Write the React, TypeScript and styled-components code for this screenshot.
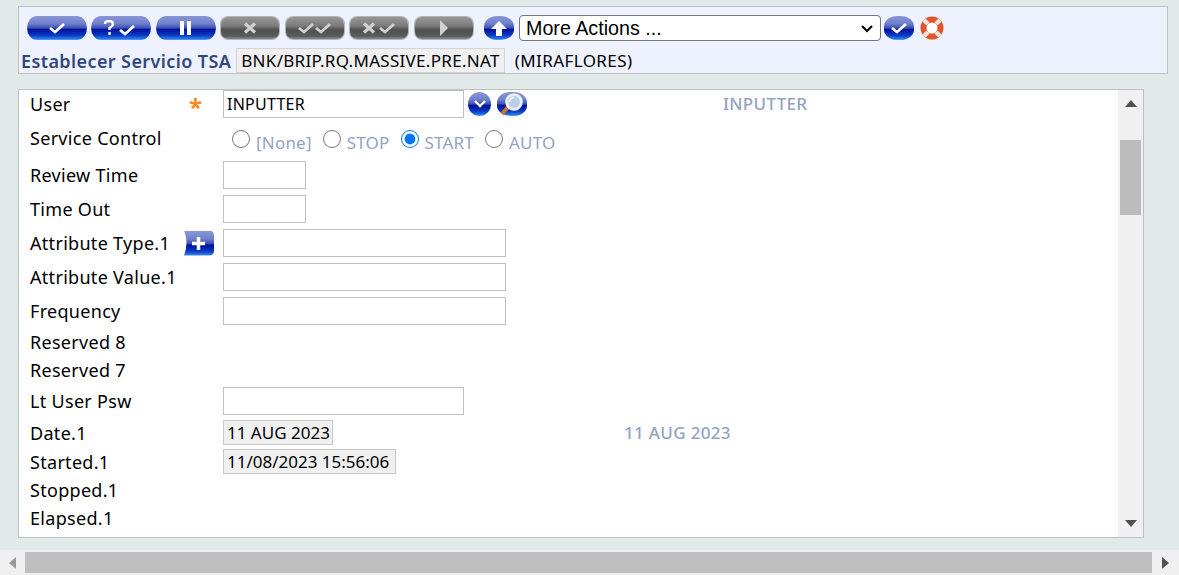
import React from 'react'
import styled, { createGlobalStyle, css } from 'styled-components'

const GlobalStyle = createGlobalStyle`
  html, body {
    margin: 0;
    height: 100%;
    overflow: hidden;
  }
  body {
    background: #e1eae8;
    color: #000;
    font-family: "Noto Sans", "DejaVu Sans", sans-serif;
    font-size: 17px;
  }
`

const Page = styled.div`
  width: 1179px;
  height: 575px;
  display: flex;
  flex-direction: column;
`

const ActionPanel = styled.div`
  box-sizing: border-box;
  width: 1150px;
  height: 68px;
  margin: 6px 0 15px 18px;
  padding: 8px 0 0 8px;
  background: #eef2fe;
  border: 1px solid #c0c0c0;
`

const Toolbar = styled.div`
  display: flex;
  align-items: center;
  height: 26px;
`

const blueGloss = css`
  background: linear-gradient(180deg, #8a96d6 0%, #6f80cc 32%, #3a50b4 50%, #02109a 56%, #0a39c4 80%, #2a7ae8 95%, #6aa2ee 100%);
`

const greyGloss = css`
  background: linear-gradient(180deg, #969696 0%, #7c7c7c 40%, #5e5e5e 52%, #505050 62%, #5c5c5c 88%, #8c8c8c 100%);
  box-shadow: 0 0 0 1px #b4b4b4;
`

const PillButton = styled.span<{ $grey?: boolean; $gap: number }>`
  display: flex;
  align-items: center;
  justify-content: center;
  flex: none;
  width: ${(p) => (p.$grey ? 58 : 60)}px;
  height: ${(p) => (p.$grey ? 22 : 24)}px;
  margin-right: ${(p) => p.$gap}px;
  border-radius: ${(p) => (p.$grey ? '7px' : '10px / 12px')};
  ${(p) => (p.$grey ? greyGloss : blueGloss)}
`

const RoundButton = styled.span<{ $w: number; $h: number; $gap?: number }>`
  display: flex;
  align-items: center;
  justify-content: center;
  flex: none;
  width: ${(p) => p.$w}px;
  height: ${(p) => p.$h}px;
  margin-right: ${(p) => p.$gap ?? 0}px;
  border-radius: ${(p) => (p.$w < 25 ? '50%' : '44%')};
  ${blueGloss}
`

const AddButton = styled.span`
  display: flex;
  align-items: center;
  justify-content: center;
  width: 31px;
  height: 25px;
  margin-left: -1px;
  clip-path: path('M1 0 H26 Q31 0 31 5 V20 Q31 25 26 25 H1 Q6 12 1 0 Z');
  ${blueGloss}
`

const Glyph = styled.svg`
  display: block;
  filter: blur(0.3px);
`

const SelectWrap = styled.span`
  position: relative;
  display: block;
  flex: none;
  width: 362px;
  height: 26px;
  margin: 0 3px 0 5px;
`

const ActionSelect = styled.select`
  box-sizing: border-box;
  display: block;
  width: 100%;
  height: 100%;
  padding: 0 0 0 6px;
  appearance: none;
  font-family: "Liberation Sans", Arial, sans-serif;
  font-size: 19.700px;
  background: #fff;
  border: 1px solid #767676;
  border-radius: 4px;
`

const SelectChevron = styled.svg`
  position: absolute;
  right: 8px;
  top: 10px;
  pointer-events: none;
`

const TitleRow = styled.div`
  display: flex;
  align-items: center;
  margin: 7px 0 0 -6px;
  height: 25px;
`

const Title = styled.span`
  color: #33477f;
  font-size: 18px;
  font-weight: 600;
  letter-spacing: 0.4px;
  margin-right: 5px;
`

const RecordId = styled.span`
  display: flex;
  align-items: center;
  box-sizing: border-box;
  height: 25px;
  padding: 0 4px;
  letter-spacing: 0.3px;
  background: #f0f0f0;
  border: 1px solid #d4d4d4;
`

const Company = styled.span`
  margin-left: 10px;
  letter-spacing: 0.4px;
`

const FormPanel = styled.div`
  box-sizing: border-box;
  display: flex;
  width: 1126px;
  height: 449px;
  margin-left: 18px;
  background: #fff;
  border: 1px solid #c0c0c0;
`

const Fields = styled.div`
  flex: 1;
  padding-left: 11px;
`

const Row = styled.div<{ $h: number }>`
  display: grid;
  grid-template-columns: 154px 39px 1fr;
  align-items: center;
  height: ${(p) => p.$h}px;
`

const Label = styled.span`
  font-size: 18px;
  letter-spacing: 0.3px;
  line-height: 24px;
`

const Mandatory = styled.span`
  color: #f28c1e;
  font-size: 24px;
  font-weight: 700;
  line-height: 28px;
  padding: 3px 0 0 5px;
  height: 28px;
  box-sizing: border-box;
`

const Value = styled.div`
  display: flex;
  align-items: center;
`

const TextBox = styled.input<{ $w: number }>`
  box-sizing: border-box;
  width: ${(p) => p.$w}px;
  height: 28px;
  padding: 0 3px;
  font-family: "Noto Sans", sans-serif;
  font-size: 16px;
  letter-spacing: 0.25px;
  color: #000;
  background: #fff;
  border: 1px solid #c0c0c0;
  border-radius: 0;
  outline: none;
`

const ReadOnly = styled.span<{ $w: number }>`
  box-sizing: border-box;
  display: flex;
  align-items: center;
  width: ${(p) => p.$w}px;
  height: 25px;
  padding: 0 3px;
  white-space: nowrap;
  background: #f0f0f0;
  border: 1px solid #c8c8c8;
`

const Enrichment = styled.span<{ $left: number }>`
  margin-left: ${(p) => p.$left}px;
  padding-bottom: 1px;
  color: #93a3c2;
  font-weight: 500;
  letter-spacing: 0.33px;
`

const LookupGroup = styled.span`
  display: flex;
  align-items: center;
  gap: 6px;
  margin-left: 4px;
`

const RadioGroup = styled.div`
  display: flex;
  align-items: center;
  padding: 2px 0 0 9px;
`

const RadioItem = styled.label`
  display: flex;
  align-items: center;
  margin-right: 11px;
  color: #93a3c2;
  letter-spacing: 0.2px;
`

const RadioDot = styled.input`
  width: 18px;
  height: 18px;
  margin: 0 6px 0 0;
`

const RadioText = styled.span`
  padding-top: 6px;
`

const Rail = styled.div`
  flex: none;
  width: 25px;
  display: flex;
  flex-direction: column;
  background: #f0f0f0;
`

const RailThumb = styled.div`
  width: 21px;
  height: 75px;
  margin: 33px 0 0 2px;
  background: #bcbcbc;
`

const Spacer = styled.div`
  flex: 1;
`

const Arrow = styled.i<{ $dir: 'up' | 'down' | 'left' | 'right' }>`
  display: block;
  width: 0;
  height: 0;
  flex: none;
  ${(p) =>
    p.$dir === 'up' &&
    css`
      margin: 10px 0 0 7px;
      border-left: 6px solid transparent;
      border-right: 6px solid transparent;
      border-bottom: 7px solid #505050;
    `}
  ${(p) =>
    p.$dir === 'down' &&
    css`
      margin: 0 0 10px 7px;
      border-left: 6px solid transparent;
      border-right: 6px solid transparent;
      border-top: 7px solid #505050;
    `}
  ${(p) =>
    p.$dir === 'left' &&
    css`
      margin-left: 9px;
      border-top: 6px solid transparent;
      border-bottom: 6px solid transparent;
      border-right: 7px solid #9a9a9a;
    `}
  ${(p) =>
    p.$dir === 'right' &&
    css`
      margin-left: 10px;
      border-top: 6px solid transparent;
      border-bottom: 6px solid transparent;
      border-left: 7px solid #505050;
    `}
`

const BottomBar = styled.div`
  display: flex;
  align-items: center;
  height: 25px;
  margin-top: 12px;
  background: #f0f0f0;
`

const BottomThumb = styled.div`
  width: 1127px;
  height: 21px;
  margin-left: 9px;
  background: #bfbfbf;
`

const Check = ({ x = 0, color = '#fff' }: { x?: number; color?: string }) => (
  <path d={`M${x + 1} 6 L${x + 6} 10 L${x + 15} 2`} fill="none" stroke={color} strokeWidth="2.8" />
)

const Cross = ({ x = 0, color = '#fff' }: { x?: number; color?: string }) => (
  <path d={`M${x + 1} 1.5 L${x + 11} 10.5 M${x + 11} 1.5 L${x + 1} 10.5`} fill="none" stroke={color} strokeWidth="3.2" />
)

const GREY = '#d0d0d0'

const toolbarButtons = [
  { gap: 4, glyph: <Glyph width="18" height="12"><Check x={1} /></Glyph> },
  {
    gap: 5,
    glyph: (
      <Glyph width="36" height="16">
        <path d="M2 4 Q2 1 6 1 Q10 1 10 4 Q10 6 6.500 8 V10 M6.500 12 V15" fill="none" stroke="#fff" strokeWidth="2.4" />
        <g transform="translate(15 4)"><Check x={1} /></g>
      </Glyph>
    ),
  },
  {
    gap: 5,
    glyph: (
      <Glyph width="12" height="14">
        <rect x="0" y="0" width="4" height="14" fill="#fff" />
        <rect x="7" y="0" width="4" height="14" fill="#fff" />
      </Glyph>
    ),
  },
  { grey: true, gap: 7, glyph: <Glyph width="13" height="12"><Cross color={GREY} /></Glyph> },
  {
    grey: true,
    gap: 6,
    glyph: (
      <Glyph width="34" height="12">
        <Check color={GREY} />
        <Check x={17} color={GREY} />
      </Glyph>
    ),
  },
  {
    grey: true,
    gap: 7,
    glyph: (
      <Glyph width="32" height="12">
        <Cross color={GREY} />
        <Check x={16} color={GREY} />
      </Glyph>
    ),
  },
  {
    grey: true,
    gap: 11,
    glyph: (
      <Glyph width="8" height="16">
        <path d="M0 0 L8 8 L0 16 Z" fill={GREY} />
      </Glyph>
    ),
  },
]

const LifeBuoy = () => (
  <Glyph width="24" height="24" viewBox="0 0 24 24">
    <circle cx="12" cy="12" r="8.500" fill="#fff" stroke="#e0562a" strokeWidth="6" />
    <g stroke="#f3e6de" strokeWidth="4.500">
      <path d="M4 4 L8 8 M20 4 L16 8 M4 20 L8 16 M20 20 L16 16" />
    </g>
  </Glyph>
)

const Magnifier = () => (
  <Glyph width="30" height="24" viewBox="0 0 30 24">
    <path d="M11 15 L5 22" stroke="#c9742c" strokeWidth="4" />
    <circle cx="17" cy="10" r="8" fill="#e6eef8" stroke="#f2f5fa" strokeWidth="1.500" />
    <circle cx="17" cy="10" r="6" fill="#b9d0e8" />
    <path d="M12.500 10 A5 5 0 0 1 17 5.500" fill="none" stroke="#fff" strokeWidth="1.500" />
  </Glyph>
)

const App = () => (
  <Page>
    <GlobalStyle />
    <ActionPanel>
      <Toolbar>
        {toolbarButtons.map((b, i) => (
          <PillButton key={i} $grey={b.grey} $gap={b.gap}>
            {b.glyph}
          </PillButton>
        ))}
        <RoundButton $w={30} $h={24}>
          <Glyph width="16" height="15">
            <path d="M8 0 L16 8 H11 V15 H5 V8 H0 Z" fill="#fff" />
          </Glyph>
        </RoundButton>
        <SelectWrap>
          <ActionSelect defaultValue="more">
            <option value="more">More Actions ...</option>
          </ActionSelect>
          <SelectChevron width="12" height="8">
            <path d="M1 1 L6 6 L11 1" fill="none" stroke="#000" strokeWidth="2" />
          </SelectChevron>
        </SelectWrap>
        <RoundButton $w={30} $h={24} $gap={6}>
          <Glyph width="18" height="12"><Check x={1} /></Glyph>
        </RoundButton>
        <LifeBuoy />
      </Toolbar>
      <TitleRow>
        <Title>Establecer Servicio TSA</Title>
        <RecordId>BNK/BRIP.RQ.MASSIVE.PRE.NAT</RecordId>
        <Company>(MIRAFLORES)</Company>
      </TitleRow>
    </ActionPanel>

    <FormPanel>
      <Fields>
        <Row $h={28}>
          <Label>User</Label>
          <Mandatory>*</Mandatory>
          <Value>
            <TextBox $w={241} defaultValue="INPUTTER" />
            <LookupGroup>
              <RoundButton $w={23} $h={24}>
                <Glyph width="12" height="8">
                  <path d="M1 1 L6 6 L11 1" fill="none" stroke="#fff" strokeWidth="2.4" />
                </Glyph>
              </RoundButton>
              <RoundButton $w={30} $h={24}>
                <Magnifier />
              </RoundButton>
            </LookupGroup>
            <Enrichment $left={196}>INPUTTER</Enrichment>
          </Value>
        </Row>
        <Row $h={40}>
          <Label>Service Control</Label>
          <span />
          <RadioGroup>
            <RadioItem><RadioDot type="radio" name="svc" /><RadioText>[None]</RadioText></RadioItem>
            <RadioItem><RadioDot type="radio" name="svc" /><RadioText>STOP</RadioText></RadioItem>
            <RadioItem><RadioDot type="radio" name="svc" defaultChecked /><RadioText>START</RadioText></RadioItem>
            <RadioItem><RadioDot type="radio" name="svc" /><RadioText>AUTO</RadioText></RadioItem>
          </RadioGroup>
        </Row>
        <Row $h={34}>
          <Label>Review Time</Label>
          <span />
          <Value><TextBox $w={83} /></Value>
        </Row>
        <Row $h={34}>
          <Label>Time Out</Label>
          <span />
          <Value><TextBox $w={83} /></Value>
        </Row>
        <Row $h={34}>
          <Label>Attribute Type.1</Label>
          <AddButton>
            <Glyph width="13" height="13">
              <path d="M6.500 0 V13 M0 6.500 H13" stroke="#fff" strokeWidth="3.500" />
            </Glyph>
          </AddButton>
          <Value><TextBox $w={283} /></Value>
        </Row>
        <Row $h={34}>
          <Label>Attribute Value.1</Label>
          <span />
          <Value><TextBox $w={283} /></Value>
        </Row>
        <Row $h={34}>
          <Label>Frequency</Label>
          <span />
          <Value><TextBox $w={283} /></Value>
        </Row>
        <Row $h={28}><Label>Reserved 8</Label></Row>
        <Row $h={28}><Label>Reserved 7</Label></Row>
        <Row $h={34}>
          <Label>Lt User Psw</Label>
          <span />
          <Value><TextBox $w={241} /></Value>
        </Row>
        <Row $h={29}>
          <Label>Date.1</Label>
          <span />
          <Value>
            <ReadOnly $w={110}>11 AUG 2023</ReadOnly>
            <Enrichment $left={291}>11 AUG 2023</Enrichment>
          </Value>
        </Row>
        <Row $h={29}>
          <Label>Started.1</Label>
          <span />
          <Value><ReadOnly $w={173}>11/08/2023 15:56:06</ReadOnly></Value>
        </Row>
        <Row $h={28}><Label>Stopped.1</Label></Row>
        <Row $h={28}><Label>Elapsed.1</Label></Row>
      </Fields>
      <Rail>
        <Arrow $dir="up" />
        <RailThumb />
        <Spacer />
        <Arrow $dir="down" />
      </Rail>
    </FormPanel>

    <BottomBar>
      <Arrow $dir="left" />
      <BottomThumb />
      <Arrow $dir="right" />
    </BottomBar>
  </Page>
)

export default App
